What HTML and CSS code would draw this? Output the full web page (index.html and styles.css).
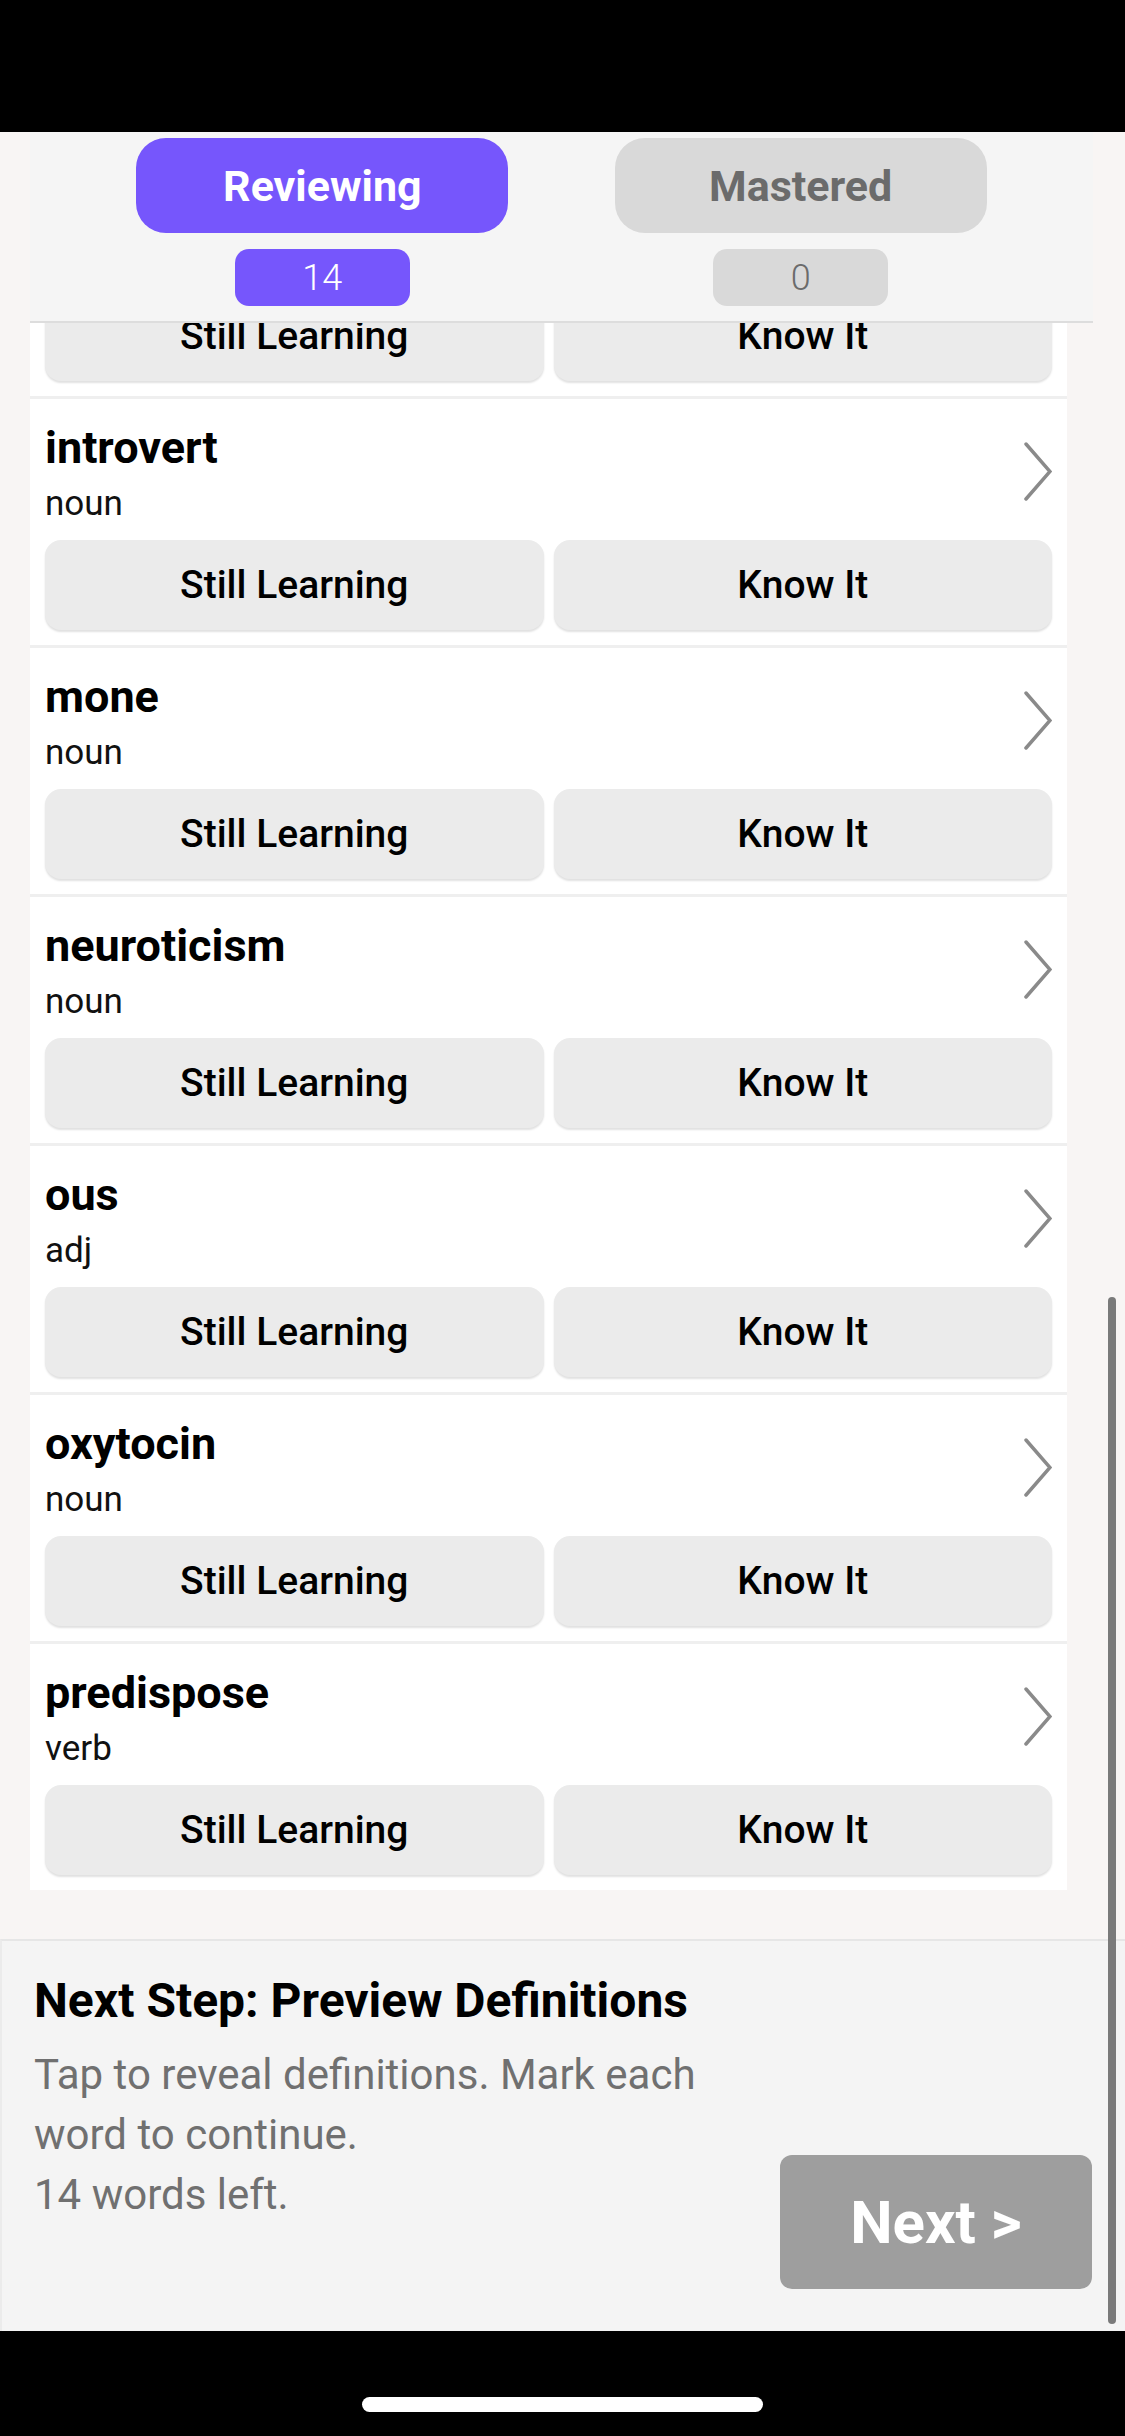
FILE: index.html
```html
<!DOCTYPE html>
<html lang="en">
<head>
  <meta charset="UTF-8" />
  <meta name="viewport" content="width=device-width, initial-scale=1.0" />
  <title>Word Review</title>
  <link rel="stylesheet" href="styles.css">
</head>
<body>

  <div class="phone">
    <div class="status-bar"></div>

    <div class="screen">
      <header class="tabs">
        <div class="tab">
          <button class="tab-btn active">Reviewing</button>
          <span class="count active">14</span>
        </div>
        <div class="tab">
          <button class="tab-btn">Mastered</button>
          <span class="count">0</span>
        </div>
      </header>

      <div class="list-viewport">
        <div class="list">
          <!-- row scrolled up under the tabs, only its buttons still show -->
          <div class="word-row partial">
            <div class="actions">
              <button class="action">Still Learning</button>
              <button class="action">Know It</button>
            </div>
          </div>

          <div class="word-row">
            <div class="word-head">
              <div>
                <div class="word">introvert</div>
                <div class="pos">noun</div>
              </div>
              <svg class="chevron" viewBox="0 0 28 59"><polyline points="2,2 26,29.5 2,57"/></svg>
            </div>
            <div class="actions">
              <button class="action">Still Learning</button>
              <button class="action">Know It</button>
            </div>
          </div>

          <div class="word-row">
            <div class="word-head">
              <div>
                <div class="word">mone</div>
                <div class="pos">noun</div>
              </div>
              <svg class="chevron" viewBox="0 0 28 59"><polyline points="2,2 26,29.5 2,57"/></svg>
            </div>
            <div class="actions">
              <button class="action">Still Learning</button>
              <button class="action">Know It</button>
            </div>
          </div>

          <div class="word-row">
            <div class="word-head">
              <div>
                <div class="word">neuroticism</div>
                <div class="pos">noun</div>
              </div>
              <svg class="chevron" viewBox="0 0 28 59"><polyline points="2,2 26,29.5 2,57"/></svg>
            </div>
            <div class="actions">
              <button class="action">Still Learning</button>
              <button class="action">Know It</button>
            </div>
          </div>

          <div class="word-row">
            <div class="word-head">
              <div>
                <div class="word">ous</div>
                <div class="pos">adj</div>
              </div>
              <svg class="chevron" viewBox="0 0 28 59"><polyline points="2,2 26,29.5 2,57"/></svg>
            </div>
            <div class="actions">
              <button class="action">Still Learning</button>
              <button class="action">Know It</button>
            </div>
          </div>

          <div class="word-row">
            <div class="word-head">
              <div>
                <div class="word">oxytocin</div>
                <div class="pos">noun</div>
              </div>
              <svg class="chevron" viewBox="0 0 28 59"><polyline points="2,2 26,29.5 2,57"/></svg>
            </div>
            <div class="actions">
              <button class="action">Still Learning</button>
              <button class="action">Know It</button>
            </div>
          </div>

          <div class="word-row">
            <div class="word-head">
              <div>
                <div class="word">predispose</div>
                <div class="pos">verb</div>
              </div>
              <svg class="chevron" viewBox="0 0 28 59"><polyline points="2,2 26,29.5 2,57"/></svg>
            </div>
            <div class="actions">
              <button class="action">Still Learning</button>
              <button class="action">Know It</button>
            </div>
          </div>
        </div>
      </div>

      <footer class="next-step">
        <h2>Next Step: Preview Definitions</h2>
        <div class="next-body">
          <p class="hint">
            Tap to reveal definitions. Mark each word to continue.
            <span class="left">14 words left.</span>
          </p>
          <button class="next-btn">Next &gt;</button>
        </div>
      </footer>

      <div class="scrollbar"></div>
    </div>

    <div class="home-bar"><span class="home-indicator"></span></div>
  </div>

</body>
</html>
```

FILE: styles.css
```css
:root {
  --purple: #7656fc;
  --tab-grey: #d9d9d9;
  --tab-text: #6b6b6b;
  --page-bg: #f8f5f4;
  --panel: #f5f5f5;
  --btn-bg: #ebebeb;
  --line: #efefef;
}

* {
  box-sizing: border-box;
  font-family: Roboto, 'Noto Sans', sans-serif;
}

body {
  margin: 0;
  background: #000;
}

button {
  border: none;
  padding: 0;
  cursor: pointer;
}

.phone {
  width: 1125px;
  height: 2436px;
  display: flex;
  flex-direction: column;
  background: #000;
}

.status-bar {
  height: 132px;
  flex: none;
}

.screen {
  position: relative;
  height: 2199px;
  display: flex;
  flex-direction: column;
  background: var(--page-bg);
}

/* top tabs */
.tabs {
  flex: none;
  width: 1063px;
  margin-left: 30px;
  height: 191px;
  padding-top: 6px;
  display: flex;
  justify-content: space-evenly;
  background: var(--panel);
  border-bottom: 2px solid #dddddd;
  position: relative;
  z-index: 2;
}

.tab {
  width: 372px;
  display: flex;
  flex-direction: column;
  align-items: center;
  gap: 16px;
}

.tab-btn {
  width: 372px;
  height: 95px;
  border-radius: 30px;
  background: var(--tab-grey);
  color: var(--tab-text);
  font-size: 43px;
  font-weight: 700;
}

.tab-btn.active { background: var(--purple); color: #fff; }

.count {
  width: 175px;
  height: 57px;
  border-radius: 14px;
  background: var(--tab-grey);
  color: var(--tab-text);
  font-size: 36px;
  font-weight: 300;
  display: flex;
  align-items: center;
  justify-content: center;
}

.count.active { background: var(--purple); color: #fff; }

/* word list */
.list-viewport {
  flex: 1;
  overflow: hidden;
}

.list {
  width: 1037px;
  margin: -32px 0 0 30px;
  background: #fff;
}

.word-row {
  border-top: 3px solid var(--line);
  padding: 23px 15px 15px;
}

.word-row.partial {
  border-top: none;
  padding-top: 0;
}

.word-row.partial .actions { margin-top: 0; }

.word-head {
  display: flex;
  justify-content: space-between;
  align-items: flex-start;
}

.word {
  font-size: 45px;
  line-height: 52px;
  font-weight: 700;
  color: #000;
}

.pos {
  font-size: 35px;
  line-height: 60px;
  color: #111;
}

.chevron {
  width: 28px;
  height: 59px;
  margin-top: 20px;
  fill: none;
  stroke: #8a8a8a;
  stroke-width: 3.5;
  stroke-linecap: round;
}

.actions {
  display: grid;
  grid-template-columns: 1fr 1fr;
  gap: 10px;
  margin-top: 6px;
}

.action {
  height: 90px;
  border-radius: 16px;
  background: var(--btn-bg);
  box-shadow: 0 2px 2px rgba(0,0,0,0.12);
  color: #000;
  font-size: 39px;
  font-weight: 500;
}

/* bottom panel */
.next-step {
  flex: none;
  height: 392px;
  padding: 32px 33px 0 32px;
  background: #f4f4f4;
  border-top: 2px solid #e6e6e6;
  border-left: 2px solid #ebebeb;
}

.next-step h2 {
  margin: 0 0 16px;
  font-size: 48px;
  line-height: 56px;
  font-weight: 700;
  color: #000;
}

.next-body {
  display: flex;
  justify-content: space-between;
  align-items: flex-end;
}

.hint {
  margin: 0 0 64px;
  width: 720px;
  font-size: 42px;
  line-height: 60px;
  color: #707070;
}

.hint .left { display: block; }

.next-btn {
  width: 312px;
  height: 134px;
  border-radius: 12px;
  background: #9e9e9e;
  color: #fff;
  font-size: 60px;
  font-weight: 700;
}

.scrollbar {
  position: absolute;
  top: 1165px;
  right: 9px;
  width: 8px;
  height: 1027px;
  border-radius: 4px;
  background: #7a7a7a;
  z-index: 3;
}

.home-bar {
  flex: 1;
  display: flex;
  justify-content: center;
  padding-top: 66px;
}

.home-indicator {
  width: 401px;
  height: 15px;
  border-radius: 8px;
  background: #fff;
}
```
